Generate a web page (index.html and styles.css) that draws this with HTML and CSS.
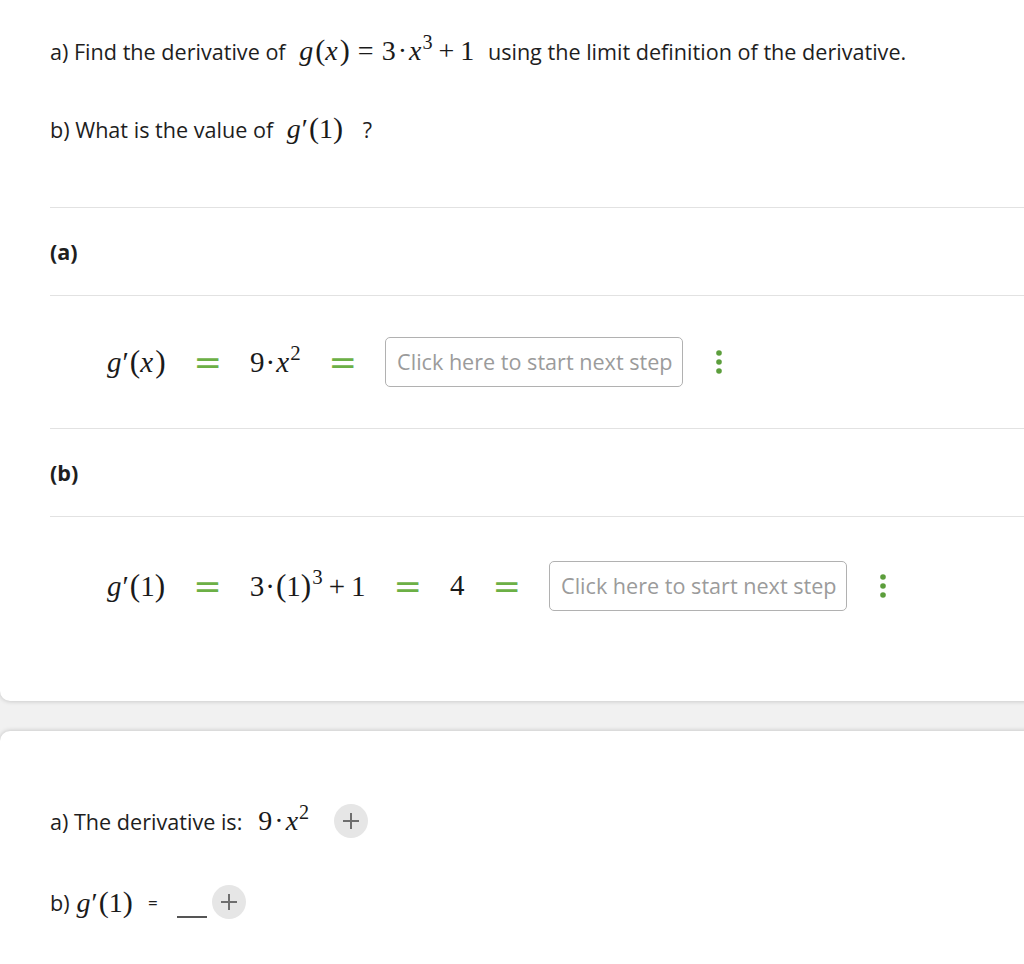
FILE: index.html
```html
<!DOCTYPE html>
<html lang="en">
<head>
    <meta charset="UTF-8">
    <title>Derivative solution</title>
    <link rel="stylesheet" href="styles.css">
</head>
<body>
    <div class="card card-top">
        <div class="question">
            <p class="q-line">a) Find the derivative of
                <span class="math"><span class="mi">g</span><span class="mp">(</span><span class="mi">x</span><span class="mp">)</span><span class="rel">=</span>3<span class="dot">·</span><span class="mi">x</span><sup>3</sup><span class="bin">+</span>1</span>
                using the limit definition of the derivative.</p>
            <p class="q-line">b) What is the value of
                <span class="math q-wide"><span class="mi">g</span><span class="prime">′</span><span class="mp">(</span>1<span class="mp">)</span></span>
                ?</p>
        </div>

        <div class="part-head">(a)</div>
        <div class="step-row">
            <span class="math step-math"><span class="mi">g</span><span class="prime">′</span><span class="mp">(</span><span class="mi">x</span><span class="mp">)</span></span>
            <span class="eq">=</span>
            <span class="math step-math">9<span class="dot">·</span><span class="mi">x</span><sup>2</sup></span>
            <span class="eq">=</span>
            <div class="next-step">Click here to start next step</div>
            <button class="more-btn" aria-label="More">
                <svg width="8" height="26" viewBox="0 0 8 26"><circle cx="4" cy="4" r="2.8" fill="#5c9e3c"/><circle cx="4" cy="13" r="2.8" fill="#5c9e3c"/><circle cx="4" cy="22" r="2.8" fill="#5c9e3c"/></svg>
            </button>
        </div>

        <div class="part-head">(b)</div>
        <div class="step-row step-row-last">
            <span class="math step-math"><span class="mi">g</span><span class="prime">′</span><span class="mp">(</span>1<span class="mp">)</span></span>
            <span class="eq">=</span>
            <span class="math step-math">3<span class="dot">·</span><span class="mp">(</span>1<span class="mp">)</span><sup>3</sup><span class="bin">+</span>1</span>
            <span class="eq">=</span>
            <span class="math step-math">4</span>
            <span class="eq">=</span>
            <div class="next-step">Click here to start next step</div>
            <button class="more-btn" aria-label="More">
                <svg width="8" height="26" viewBox="0 0 8 26"><circle cx="4" cy="4" r="2.8" fill="#5c9e3c"/><circle cx="4" cy="13" r="2.8" fill="#5c9e3c"/><circle cx="4" cy="22" r="2.8" fill="#5c9e3c"/></svg>
            </button>
        </div>
    </div>

    <div class="card card-bottom">
        <div class="answer-line answer-a">
            <span>a) The derivative is:</span>
            <span class="math"><span>9<span class="dot">·</span><span class="mi">x</span><sup>2</sup></span></span>
            <button class="add-btn" aria-label="Add">
                <svg width="18" height="18" viewBox="0 0 18 18"><path d="M9 1v16M1 9h16" stroke="#6e6e6e" stroke-width="2"/></svg>
            </button>
        </div>
        <div class="answer-line answer-b">
            <span>b)</span>
            <span class="math"><span class="mi">g</span><span class="prime">′</span><span class="mp">(</span>1<span class="mp">)</span></span>
            <span class="small-eq">=</span>
            <span class="blank"></span>
            <button class="add-btn" aria-label="Add">
                <svg width="18" height="18" viewBox="0 0 18 18"><path d="M9 1v16M1 9h16" stroke="#6e6e6e" stroke-width="2"/></svg>
            </button>
        </div>
    </div>
</body>
</html>
```

FILE: styles.css
```css
* {
    margin: 0;
    padding: 0;
    box-sizing: border-box;
}

html, body {
    overflow-x: hidden;
}

body {
    font-family: 'Open Sans', 'Noto Sans', Arial, sans-serif;
    font-size: 21.6px;
    color: #1e1e1e;
    background-color: #f1f1f1;
}

.card {
    background-color: #fff;
    margin-right: -20px;
    box-shadow: 0 0 5px rgba(0, 0, 0, 0.22);
}

.card-top {
    border-radius: 0 0 10px 10px;
    padding: 32px 0 47px 50px;
}

.card-bottom {
    margin-top: 30px;
    border-radius: 10px 10px 0 0;
    padding: 70px 0 60px 50px;
    min-height: 300px;
}

/* question text */
.q-line {
    height: 40px;
    line-height: 40px;
    white-space: nowrap;
}

.q-line + .q-line {
    margin-top: 38px;
}

.question {
    padding-bottom: 57px;
}

.q-line .math {
    margin: 0 8px;
    line-height: 1;
}

.q-line .q-wide {
    margin-right: 14px;
}

/* math */
.math {
    font-family: 'Liberation Serif', 'DejaVu Serif', serif;
    font-size: 28px;
    color: #1a1a1a;
    white-space: nowrap;
}

.mi {
    font-style: italic;
}

.mi + .mp {
    margin-left: 2px;
}

.mp {
    font-size: 1.08em;
}

.prime {
    font-size: 1em;
    margin-left: 1px;
    margin-right: 1px;
}

.rel {
    margin: 0 8px;
}

.bin {
    margin: 0 6px;
}

.dot {
    margin: 0 2px;
}

.math sup {
    font-size: 0.72em;
    vertical-align: 0.55em;
    line-height: 0;
    margin-left: 1px;
}

/* parts */
.part-head {
    border-top: 1px solid #e2e2e2;
    font-weight: 700;
    height: 88px;
    line-height: 88px;
}

.step-row {
    border-top: 1px solid #e2e2e2;
    height: 133px;
    display: flex;
    align-items: center;
    gap: 28px;
    padding-left: 57px;
}

.step-row-last {
    height: 138px;
}

.step-math {
    font-size: 29px;
    line-height: 1;
}

.step-math .dot {
    margin: 0 1px;
}

.eq {
    font-family: 'DejaVu Sans', sans-serif;
    font-size: 34px;
    color: #6cb046;
    line-height: 1;
}

.next-step {
    width: 298px;
    height: 50px;
    border: 1px solid #b1b1b1;
    border-radius: 5px;
    color: #9b9b9b;
    line-height: 48px;
    padding-left: 11px;
    white-space: nowrap;
    cursor: text;
}

.more-btn {
    background: none;
    border: none;
    display: flex;
    margin-left: 4px;
    cursor: pointer;
}

/* answers */
.answer-line {
    display: flex;
    align-items: center;
    white-space: nowrap;
    height: 40px;
}

.answer-a {
    gap: 16px;
}

.answer-a .add-btn {
    margin-left: 9px;
}

.answer-b {
    margin-top: 41px;
    gap: 7px;
}

.small-eq {
    font-size: 17px;
    margin: 0 12px 0 8px;
}

.blank {
    width: 30px;
    border-bottom: 2px solid #555;
    align-self: flex-end;
    margin-bottom: 4px;
}

.answer-b .add-btn {
    margin-left: -2px;
}

.add-btn {
    width: 34px;
    height: 34px;
    border-radius: 50%;
    border: none;
    background-color: #e6e6e6;
    display: flex;
    align-items: center;
    justify-content: center;
    cursor: pointer;
}
```
